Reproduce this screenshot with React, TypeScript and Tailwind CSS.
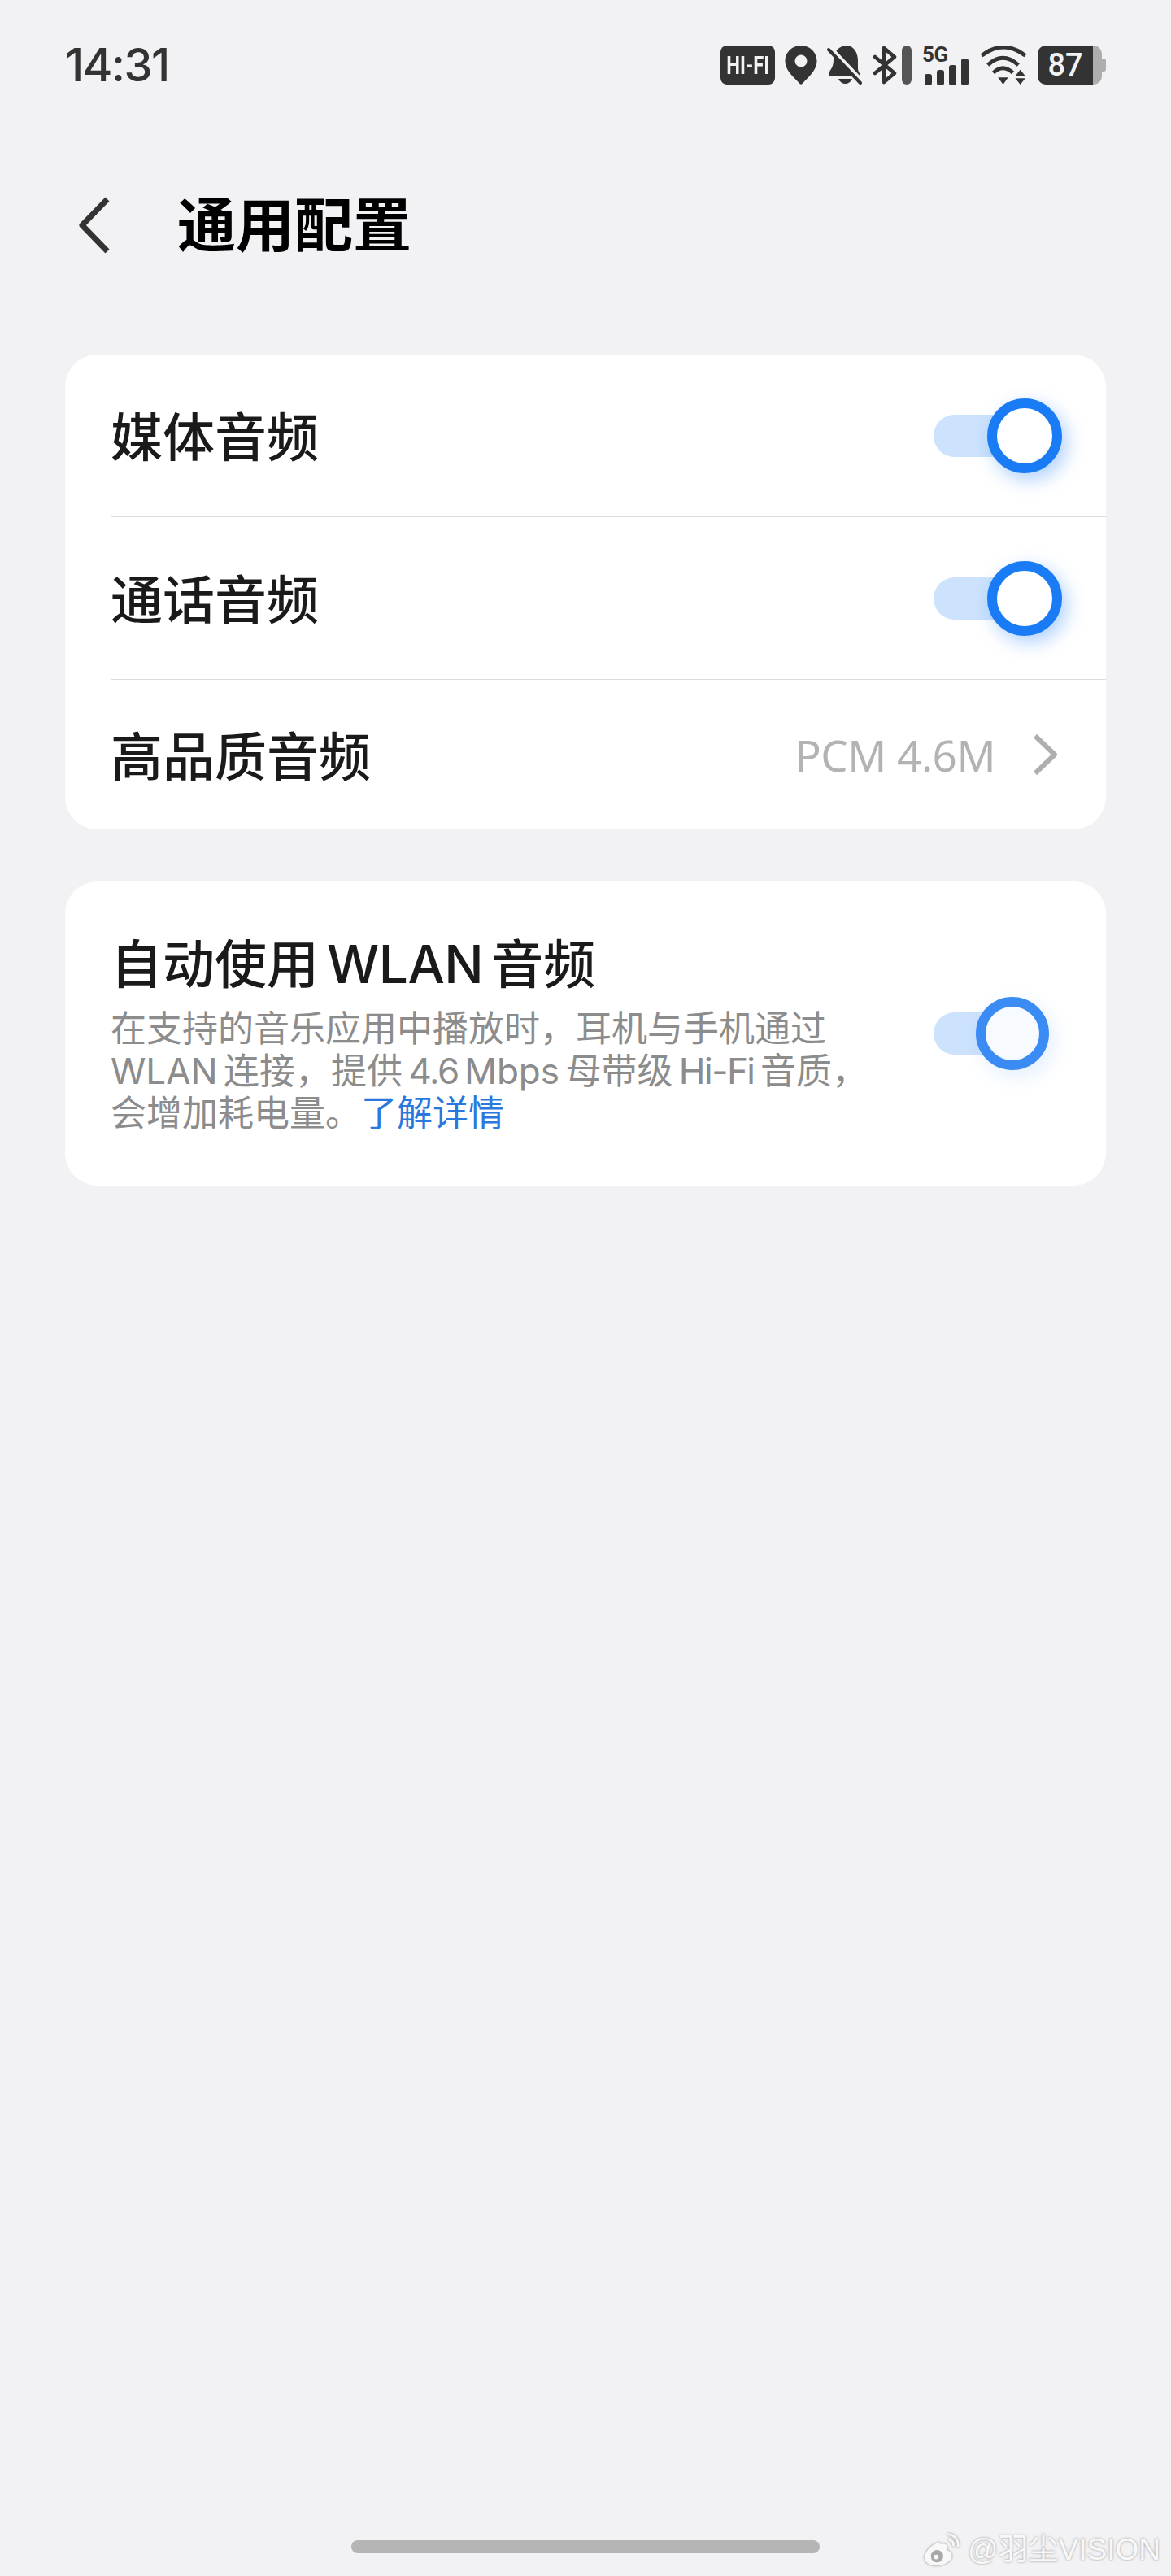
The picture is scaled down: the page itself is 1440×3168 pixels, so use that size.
const sans = "font-['Inter','Noto_Sans_CJK_SC',sans-serif]";

function Toggle({ faded = false }: { faded?: boolean }) {
  if (faded) {
    return (
      <div className="relative h-[90px] w-[142px] shrink-0">
        <div className="absolute left-0 top-[19px] h-[52px] w-[70px] rounded-l-[26px] bg-[#cde2fd]" />
        <div className="absolute left-[52px] top-0 h-[90px] w-[90px] rounded-full border-[12px] border-[#3a8bf3] bg-[#f7faff] shadow-[6px_8px_24px_rgba(58,139,243,0.14)]" />
      </div>
    );
  }
  return (
    <div className="relative h-[92px] w-[158px] shrink-0">
      <div className="absolute left-0 top-[20px] h-[52px] w-[90px] rounded-l-[26px] bg-[#cde2fd]" />
      <div className="absolute left-[66px] top-0 h-[92px] w-[92px] rounded-full border-[12px] border-[#1a7cf5] bg-white shadow-[6px_8px_22px_rgba(26,124,245,0.35)]" />
    </div>
  );
}

function StatusIcons() {
  return (
    <div className="flex h-[48px] items-center text-[#333333]">
      <div className="flex h-[48px] w-[67px] items-center justify-center rounded-[8px] bg-[#333333] text-[#f1f2f4]">
        <span className="shrink-0 scale-x-[0.74] whitespace-nowrap font-['Roboto',sans-serif] text-[32px] font-bold leading-none">
          HI-FI
        </span>
      </div>
      <svg className="ml-[12px]" width="40" height="48" viewBox="0 0 39 48">
        <path
          fillRule="evenodd"
          fill="currentColor"
          d="M19.500 0C30 0 39 8 39 19c0 7-3.500 12-8 17.500C27 41 23 44.500 21 47c-1 1-2 1-3 0-2-2.500-6-6-10-10.500C3.500 31 0 26 0 19 0 8 9 0 19.500 0Zm0 11.500a7.500 7.500 0 1 0 0 15 7.500 7.500 0 0 0 0-15Z"
        />
      </svg>
      <svg className="ml-[12px]" width="43" height="48" viewBox="0 0 43 48">
        <path
          fill="currentColor"
          d="M24 0C33 0 38 9 38 19v9c0 5 3 6 3 9H3C1 37 2 33 5 29c2-3 3-7 3-12C8 8 15 0 24 0ZM14 41h17c-2 4-5 6-8.500 6S16 45 14 41Z"
        />
        <path d="M4 2 44 44" stroke="#f2f2f5" strokeWidth="4" fill="none" />
        <path d="M2 5 41 46" stroke="currentColor" strokeWidth="4" strokeLinecap="round" fill="none" />
      </svg>
      <svg className="ml-[13px]" width="31" height="48" viewBox="0 0 31 48">
        <path
          d="M3 14 27 34 14 45V3L27 14 3 34"
          fill="none"
          stroke="currentColor"
          strokeWidth="4.500"
          strokeLinejoin="round"
          strokeLinecap="round"
        />
      </svg>
      <div className="ml-[5px] h-[48px] w-[12px] rounded-full bg-[#555555]" />
      <div className="relative ml-[13px] h-[48px] w-[56px]">
        <span className="absolute left-0 top-0 font-['Roboto',sans-serif] text-[26px] font-bold leading-[22px] tracking-[-0.5px]">
          5G
        </span>
        <div className="absolute bottom-[-1px] left-[3px] flex items-end gap-[6px]">
          <div className="h-[14px] w-[9px] rounded-[3px] bg-[#333333]" />
          <div className="h-[19px] w-[9px] rounded-[3px] bg-[#333333]" />
          <div className="h-[25px] w-[9px] rounded-[3px] bg-[#333333]" />
          <div className="h-[33px] w-[9px] rounded-[3px] bg-[#333333]" />
        </div>
      </div>
      <svg className="ml-[14px]" width="60" height="48" viewBox="0 0 60 50">
        <g fill="none" stroke="currentColor" strokeWidth="5">
          <path d="M2 13Q30-9 58 13" />
          <path d="M10 25Q29 7 49 25" />
          <path d="M17 35Q29 23 42 35" />
        </g>
        <path fill="currentColor" d="M23 41h13l-6.500 9ZM45 39l6.500-8 6.500 8ZM45 42h13l-6.500 8Z" />
      </svg>
      <div className="ml-[12px] flex items-center">
        <div className="flex h-[48px] w-[79px] overflow-hidden rounded-[10px] bg-[#aeaeae]">
          <div className="flex h-full w-[68px] items-center justify-center bg-[#333333] font-['Roboto',sans-serif] text-[38px] font-medium leading-none text-[#f1f2f4]">
            87
          </div>
        </div>
        <div className="h-[16px] w-[5px] rounded-r-[3px] bg-[#aeaeae]" />
      </div>
    </div>
  );
}

function Divider() {
  return <div className="ml-[56px] h-px bg-[#dcdcdd]" />;
}

export default function App() {
  return (
    <div className={`relative flex h-[3168px] w-[1440px] flex-col overflow-hidden bg-[#f2f2f5] ${sans}`}>
      <div className="mt-[56px] flex h-[48px] items-center justify-between px-[80px]">
        <span className="font-['Inter',sans-serif] text-[56px] font-medium leading-[48px] tracking-[-1.5px] text-[#333333]">
          14:31
        </span>
        <StatusIcons />
      </div>

      <div className="mt-[133px] flex h-[80px] items-center pl-[94px]">
        <svg width="42" height="72" viewBox="0 0 42 72">
          <path d="M38 4 7 36l31 32" fill="none" stroke="#333333" strokeWidth="7" strokeLinejoin="round" />
        </svg>
        <h1 className="ml-[82px] text-[72px] font-bold leading-[80px] text-black">通用配置</h1>
      </div>

      <div className="mx-[80px] mt-[119px] rounded-[40px] bg-white">
        <div className="flex h-[199px] items-center justify-between pl-[56px] pr-[54px]">
          <span className="pt-[5px] text-[64px] font-medium leading-none text-[#1a1a1a]">媒体音频</span>
          <Toggle />
        </div>
        <Divider />
        <div className="flex h-[199px] items-center justify-between pl-[56px] pr-[54px]">
          <span className="pt-[5px] text-[64px] font-medium leading-none text-[#1a1a1a]">通话音频</span>
          <Toggle />
        </div>
        <Divider />
        <div className="flex h-[184px] items-center justify-between pl-[56px] pr-[60px]">
          <span className="pt-[5px] text-[64px] font-medium leading-none text-[#1a1a1a]">高品质音频</span>
          <div className="flex items-center">
            <span className="font-['Noto_Sans',sans-serif] text-[53px] leading-none tracking-[-0.5px] text-[#b3b3b3]">
              PCM 4.6M
            </span>
            <svg className="ml-[46px]" width="30" height="52" viewBox="0 0 30 52">
              <path d="M3 3 27 26 3 49" fill="none" stroke="#afafaf" strokeWidth="6" strokeLinejoin="round" />
            </svg>
          </div>
        </div>
      </div>

      <div className="mx-[80px] mt-[64px] flex h-[374px] items-center justify-between rounded-[40px] bg-white pl-[56px] pr-[70px]">
        <div className="whitespace-nowrap pb-[2px]">
          <div className="text-[64px] font-medium leading-[80px] text-[#1a1a1a] [word-spacing:-7px]">
            自动使用 <span className="tracking-[-0.5px]">WLAN</span> 音频
          </div>
          <p className="mt-[13px] text-[44px] leading-[52px] text-[#8c8c8c] [word-spacing:-5px]">
            在支持的音乐应用中播放时，耳机与手机通过
            <br />
            WLAN 连接，提供 <span className="tracking-[-1.5px]">4.6</span> Mbps 母带级{" "}
            <span className="tracking-[-1.5px]">Hi-Fi</span> 音质，
            <br />
            会增加耗电量。<span className="text-[#2a78dc]">了解详情</span>
          </p>
        </div>
        <Toggle faded />
      </div>

      <div className="mx-auto mb-[28px] mt-auto h-[16px] w-[576px] rounded-full bg-[#b5b5b6]" />

      <div className="absolute bottom-[8px] right-[13px] flex items-center font-['Liberation_Sans','Noto_Sans_CJK_SC',sans-serif] text-[37px] leading-[48px] text-[#f8f8f8] [text-shadow:0_0_3px_rgba(90,90,90,0.6)]">
        <svg className="[filter:drop-shadow(0_0_1.5px_rgba(90,90,90,0.7))]" width="50" height="42" viewBox="0 0 50 44">
          <path
            d="M20 12C9 16 1 26 2 33c1 7 10 10 18 9 10-1 18-7 17-14-1-4-5-5-6-6 1-5-1-8-5-8-2 0-4 1-6-2Z"
            fill="#f8f8f8"
          />
          <circle cx="18" cy="30" r="8" fill="#a8a8a8" />
          <circle cx="17" cy="31" r="3" fill="#f8f8f8" />
          <path d="M32 2c8 0 14 7 13 16M33 9c4 0 7 3 6 8" fill="none" stroke="#f8f8f8" strokeWidth="3" />
        </svg>
        <span className="ml-[6px]">@羽尘VISION</span>
      </div>
    </div>
  );
}
